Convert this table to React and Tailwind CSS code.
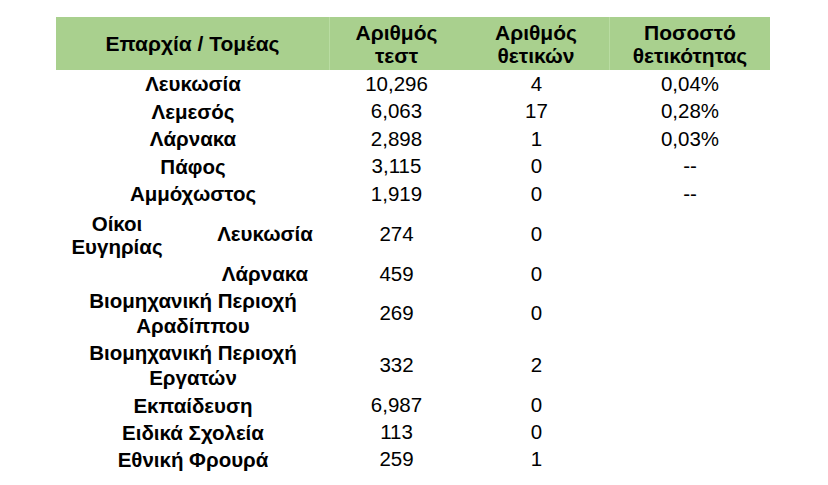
import React from "react";

const font = { fontFamily: '"Liberation Sans", Arial, sans-serif' };

function Row({ h, c1, c2, c3, c4 }) {
  return (
    <div className={`flex items-center ${h}`}>
      <div className="w-[274px] flex items-center justify-center text-center font-bold leading-[25px]">{c1}</div>
      <div className="w-[133px] text-center">{c2}</div>
      <div className="w-[147px] text-center">{c3}</div>
      <div className="w-[160px] text-center">{c4}</div>
    </div>
  );
}

const rows = [
  ["Λευκωσία", "10,296", "4", "0,04%"],
  ["Λεμεσός", "6,063", "17", "0,28%"],
  ["Λάρνακα", "2,898", "1", "0,03%"],
  ["Πάφος", "3,115", "0", "--"],
  ["Αμμόχωστος", "1,919", "0", "--"],
];

export default function App() {
  return (
    <div className="w-[828px] h-[485px] bg-white text-black text-[20.5px] leading-[24px]" style={font}>
      <div className="pt-[17px] pl-[56px]">
        <div className="flex h-[53px] w-[714px] bg-[#a9d08e] font-bold text-[21px] leading-[23px] items-stretch">
          <div className="w-[274px] flex items-center justify-center border-r border-[#b9dca2]">Επαρχία / Τομέας</div>
          <div className="w-[133px] flex items-center justify-center text-center">Αριθμός<br />τεστ</div>
          <div className="w-[147px] flex items-center justify-center text-center border-r border-[#b9dca2]">Αριθμός<br />θετικών</div>
          <div className="w-[160px] flex items-center justify-center text-center">Ποσοστό<br />θετικότητας</div>
        </div>
        {rows.map((r, i) => (
          <Row key={i} h="h-[27.5px]" c1={r[0]} c2={r[1]} c3={r[2]} c4={r[3]} />
        ))}
        <div className="flex items-center h-[53px]">
          <div className="w-[274px] flex items-center font-bold">
            <div className="w-[122px] text-center leading-[23px] pt-[2px]">Οίκοι<br />Ευγηρίας</div>
            <div className="w-[152px] text-center pl-[22px]">Λευκωσία</div>
          </div>
          <div className="w-[133px] text-center">274</div>
          <div className="w-[147px] text-center">0</div>
          <div className="w-[160px]"></div>
        </div>
        <div className="flex items-center h-[27px]">
          <div className="w-[274px] flex items-center font-bold">
            <div className="w-[122px]"></div>
            <div className="w-[152px] text-center pl-[22px]">Λάρνακα</div>
          </div>
          <div className="w-[133px] text-center">459</div>
          <div className="w-[147px] text-center">0</div>
          <div className="w-[160px]"></div>
        </div>
        <Row h="h-[50px]" c1={<span>Βιομηχανική Περιοχή<br />Αραδίππου</span>} c2="269" c3="0" c4="" />
        <Row h="h-[54px]" c1={<span>Βιομηχανική Περιοχή<br />Εργατών</span>} c2="332" c3="2" c4="" />
        <Row h="h-[27px]" c1="Εκπαίδευση" c2="6,987" c3="0" c4="" />
        <Row h="h-[27px]" c1="Ειδικά Σχολεία" c2="113" c3="0" c4="" />
        <Row h="h-[27px]" c1="Εθνική Φρουρά" c2="259" c3="1" c4="" />
      </div>
    </div>
  );
}
